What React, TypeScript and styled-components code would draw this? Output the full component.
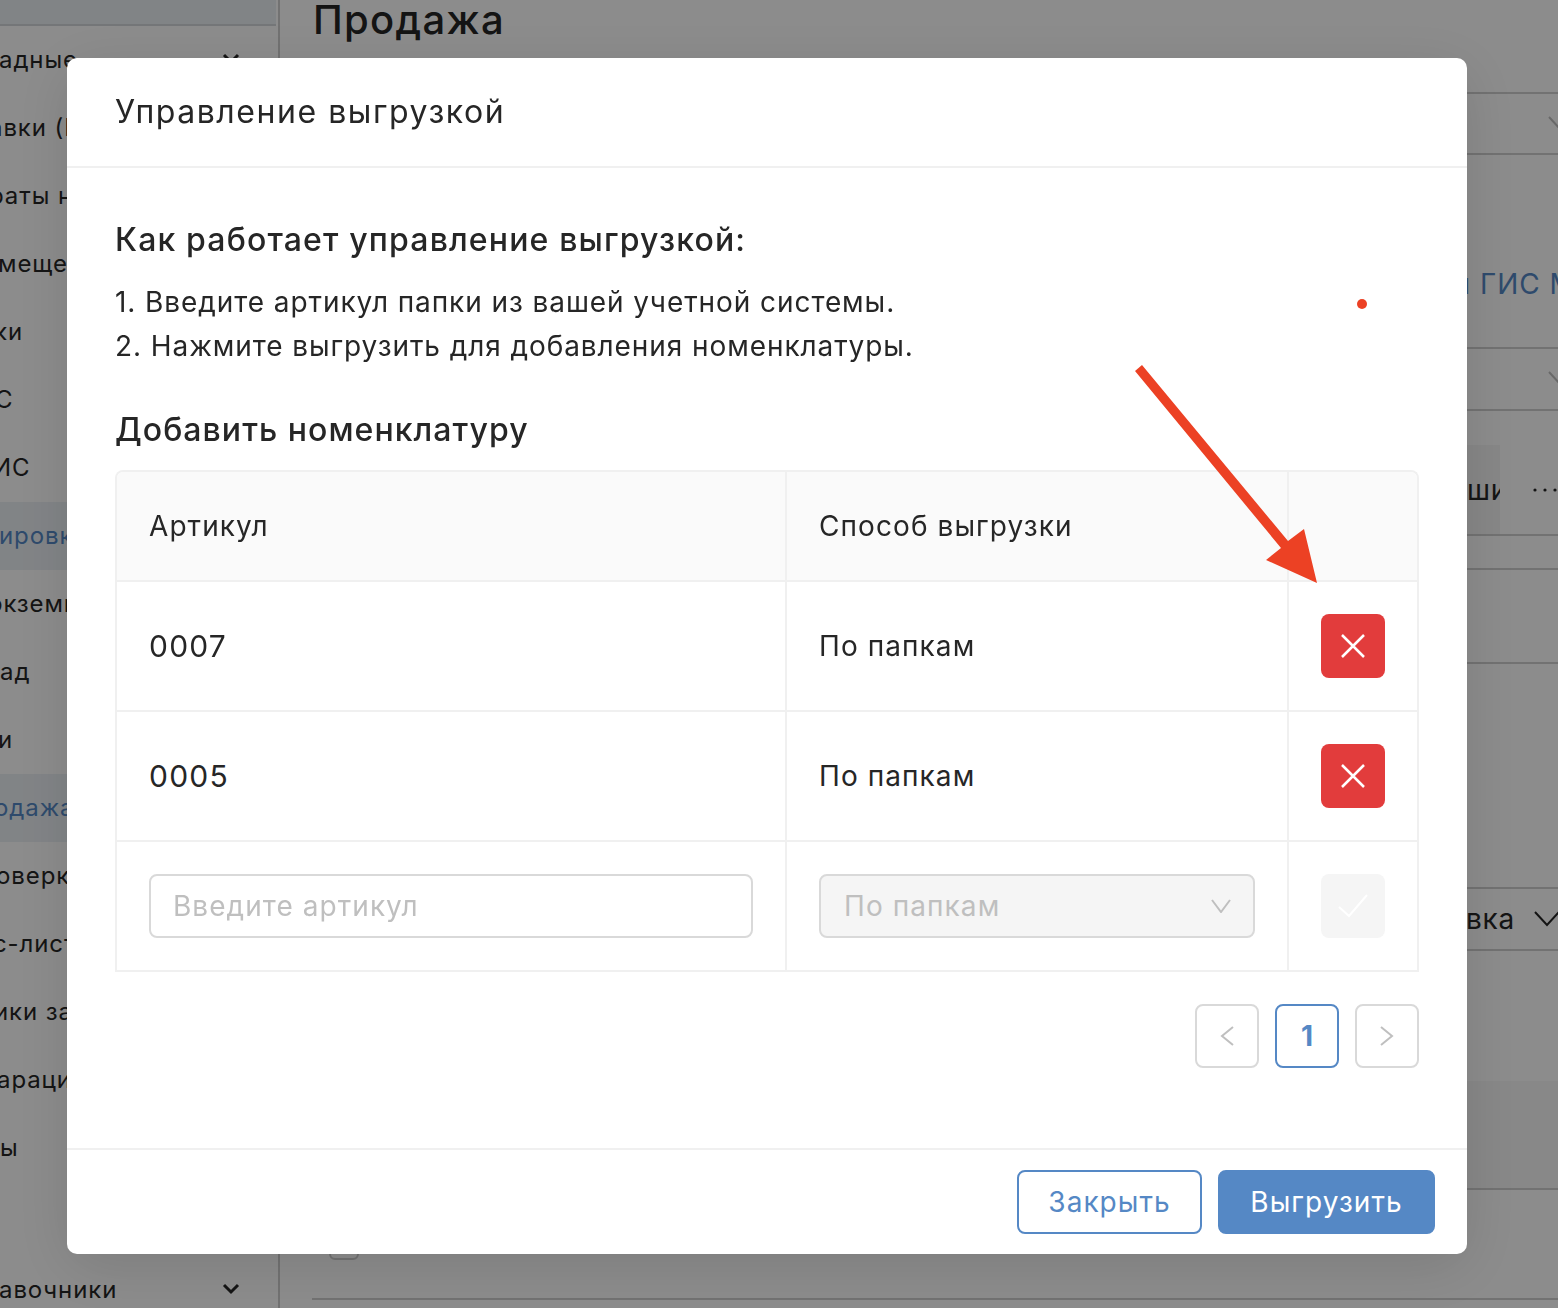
import * as React from 'react'
import styled, { createGlobalStyle } from 'styled-components'

const GlobalStyle = createGlobalStyle`
  html, body {
    margin: 0;
    padding: 0;
    height: 100%;
    overflow: hidden;
    background: white;
    font-family: Inter, "Noto Sans", "Liberation Sans", sans-serif;
    color: #262626;
  }
  * {
    box-sizing: border-box;
  }
`

const PageContainer = styled.div`
  display: flex;
  width: 1558px;
  height: 1308px;
  overflow: hidden;
`

const Sidebar = styled.div`
  display: flex;
  flex-direction: column;
  flex-shrink: 0;
  width: 280px;
  border-right: 2px solid #cfcfcf;
  overflow: hidden;
`

const SidebarTop = styled.div`
  flex-shrink: 0;
  width: 276px;
  height: 26px;
  background-color: #ecf1f5;
  border-bottom: 2px solid #d4d8db;
`

const SidebarItem = styled.div<{ $active?: boolean; $gap?: number }>`
  display: flex;
  flex-shrink: 0;
  align-items: center;
  justify-content: space-between;
  height: 68px;
  margin-top: ${(p) => p.$gap || 0}px;
  padding: 0 38px 2px 0;
  font-size: 24px;
  letter-spacing: 0.9px;
  white-space: nowrap;
  background-color: ${(p) => (p.$active ? '#ecf1f5' : 'transparent')};
  color: ${(p) => (p.$active ? '#5588c5' : '#262626')};
`

const SidebarLabel = styled.span<{ $shift?: number }>`
  margin-left: ${(p) => p.$shift || 0}px;
`

const Main = styled.div`
  display: flex;
  flex-direction: column;
  flex-grow: 1;
  min-width: 0;
  padding-left: 32px;
  overflow: hidden;
`

const PageTitle = styled.h1`
  flex-shrink: 0;
  height: 92px;
  margin: 0;
  padding-left: 1px;
  font-size: 40px;
  font-weight: 500;
  line-height: 40px;
  letter-spacing: 1.3px;
`

const Field = styled.div<{ $gap?: number; $height: number }>`
  display: flex;
  flex-shrink: 0;
  align-items: center;
  justify-content: flex-end;
  gap: 19px;
  height: ${(p) => p.$height}px;
  margin-top: ${(p) => p.$gap || 0}px;
  border-top: 2px solid #cfcfcf;
  border-bottom: 2px solid #cfcfcf;
  font-size: 28px;
  letter-spacing: 0.8px;
`

const BlueLink = styled.div`
  display: flex;
  flex-shrink: 0;
  align-items: center;
  justify-content: flex-end;
  height: 192px;
  padding-top: 66px;
  margin-right: -37px;
  font-size: 28px;
  letter-spacing: 1px;
  white-space: nowrap;
  color: #5588c5;
`

const Tabs = styled.div`
  display: flex;
  flex-shrink: 0;
  align-items: stretch;
  justify-content: flex-end;
  height: 91px;
  margin-top: 34px;
  border-bottom: 2px solid #cfcfcf;
`

const Tab = styled.div`
  display: flex;
  align-items: center;
  width: 300px;
  padding-left: 267px;
  margin-right: 33px;
  background-color: #f5f5f5;
  font-size: 28px;
  letter-spacing: 0.8px;
  white-space: nowrap;
  overflow: hidden;
`

const DotsSlot = styled.div`
  display: flex;
  align-items: center;
  margin-right: 1px;
`

const Band = styled.div`
  flex-shrink: 0;
  height: 109px;
  margin-top: 130px;
  background-color: #f7f7f7;
  border-bottom: 2px solid #cfcfcf;
`

const CheckRow = styled.div`
  display: flex;
  flex-shrink: 0;
  height: 110px;
  padding: 40px 0 0 17px;
  border-bottom: 2px solid #cfcfcf;
`

const RowCheckbox = styled.div`
  width: 30px;
  height: 30px;
  border: 2px solid #cfcfcf;
  border-radius: 6px;
`

const Overlay = styled.div`
  position: fixed;
  inset: 0;
  padding: 58px 0 0 67px;
  background-color: rgba(0, 0, 0, 0.45);
`

const Modal = styled.div`
  display: flex;
  flex-direction: column;
  width: 1400px;
  height: 1196px;
  background-color: white;
  border-radius: 10px;
  box-shadow: 0 12px 60px rgba(0, 0, 0, 0.12);
`

const ModalHeader = styled.div`
  display: flex;
  flex-shrink: 0;
  align-items: center;
  height: 110px;
  padding: 0 48px 2px;
  border-bottom: 2px solid #f0f0f0;
  font-size: 32px;
  font-weight: 400;
  letter-spacing: 1.55px;
`

const ModalBody = styled.div`
  display: flex;
  flex-direction: column;
  flex-grow: 1;
  padding: 54px 48px 0;
`

const Heading = styled.div<{ $gap?: number; $spacing: number }>`
  margin-top: ${(p) => p.$gap || 0}px;
  font-size: 32px;
  font-weight: 500;
  line-height: 36px;
  letter-spacing: ${(p) => p.$spacing}px;
`

const Steps = styled.div`
  margin-top: 22px;
  font-size: 28px;
  line-height: 44px;
  letter-spacing: 0.92px;
`

const Table = styled.div`
  display: grid;
  grid-template-columns: 670px 502px 128px;
  grid-template-rows: 110px repeat(3, 130px);
  margin-top: 22px;
  border: 2px solid #f0f0f0;
  border-bottom: 0;
  border-radius: 8px 8px 0 0;
  overflow: hidden;
`

const Cell = styled.div<{ $head?: boolean; $last?: boolean; $code?: boolean }>`
  display: flex;
  align-items: center;
  padding: 0 32px;
  background-color: ${(p) => (p.$head ? '#fafafa' : 'white')};
  border-bottom: 2px solid #f0f0f0;
  border-right: ${(p) => (p.$last ? '0' : '2px solid #f0f0f0')};
  font-size: ${(p) => (p.$code ? '30px' : '28px')};
  letter-spacing: ${(p) => (p.$code ? '1.2px' : '1.08px')};
`

const TextInput = styled.input`
  width: 100%;
  height: 64px;
  padding: 0 22px;
  border: 2px solid #d9d9d9;
  border-radius: 8px;
  outline: none;
  font-family: inherit;
  font-size: 28px;
  letter-spacing: 1.05px;
  color: #262626;

  &::placeholder {
    color: #bfbfbf;
    opacity: 1;
  }
`

const SelectBox = styled.div`
  display: flex;
  align-items: center;
  justify-content: space-between;
  width: 100%;
  height: 64px;
  padding: 0 22px 0 23px;
  background-color: #f5f5f5;
  border: 2px solid #d9d9d9;
  border-radius: 8px;
  color: #bfbfbf;
`

const IconButton = styled.button<{ $danger?: boolean }>`
  display: flex;
  flex-shrink: 0;
  align-items: center;
  justify-content: center;
  width: 64px;
  height: 64px;
  padding: 0;
  border: 0;
  border-radius: 8px;
  background-color: ${(p) => (p.$danger ? '#e23c3c' : '#f5f5f5')};
`

const Pagination = styled.div`
  display: flex;
  justify-content: flex-end;
  gap: 16px;
  margin-top: 32px;
`

const PageButton = styled.button<{ $active?: boolean }>`
  display: flex;
  align-items: center;
  justify-content: center;
  width: 64px;
  height: 64px;
  padding: 0;
  background-color: white;
  border: 2px solid ${(p) => (p.$active ? '#5588c5' : '#d9d9d9')};
  border-radius: 8px;
  font-family: inherit;
  font-size: 28px;
  font-weight: 700;
  color: #5588c5;
`

const ModalFooter = styled.div`
  display: flex;
  flex-shrink: 0;
  justify-content: flex-end;
  gap: 16px;
  height: 106px;
  padding: 20px 32px 0;
  border-top: 2px solid #f0f0f0;
`

const FooterButton = styled.button<{ $primary?: boolean; $width: number }>`
  width: ${(p) => p.$width}px;
  height: 64px;
  padding: 0;
  background-color: ${(p) => (p.$primary ? '#5588c5' : 'white')};
  border: 2px solid #5588c5;
  border-radius: 8px;
  font-family: inherit;
  font-size: 28px;
  letter-spacing: 1.05px;
  color: ${(p) => (p.$primary ? 'white' : '#5588c5')};
`

const ChevronSlot = styled.span<{ $bleed: number }>`
  display: flex;
  margin-right: -${(p) => p.$bleed}px;
`

const Annotation = styled.svg`
  position: absolute;
  top: 0;
  left: 0;
  pointer-events: none;
`

const StrokeIcon = ({
  width,
  height,
  d,
  color,
  stroke = 2,
}: {
  width: number
  height: number
  d: string
  color: string
  stroke?: number
}) => (
  <svg
    width={width}
    height={height}
    viewBox={`0 0 ${width} ${height}`}
    fill="none"
    stroke={color}
    strokeWidth={stroke}
    style={{ flexShrink: 0 }}
  >
    <path d={d} />
  </svg>
)

const CloseIcon = () => <StrokeIcon width={24} height={24} d="M1 1 L23 23 M23 1 L1 23" color="white" stroke={2.5} />
const MenuChevron = () => <StrokeIcon width={18} height={12} d="M2 2 L9 9 L16 2" color="#262626" stroke={3} />
const FieldChevron = ({ color, bleed }: { color: string; bleed: number }) => (
  <ChevronSlot $bleed={bleed}>
    <StrokeIcon width={26} height={16} d="M1 1 L13 14 L25 1" color={color} />
  </ChevronSlot>
)
const MoreIcon = () => (
  <svg width={24} height={6} viewBox="0 0 24 6" fill="#262626">
    <circle cx={2} cy={3} r={1.6} />
    <circle cx={12} cy={3} r={1.6} />
    <circle cx={22} cy={3} r={1.6} />
  </svg>
)

const sidebarItems = [
  { label: 'адные', shift: -1 },
  { label: 'авки (К', shift: -11 },
  { label: 'раты на', shift: -11 },
  { label: 'мещения', shift: -2 },
  { label: 'ки', shift: -6 },
  { label: 'С', shift: -5 },
  { label: 'ИС', shift: -7 },
  { label: 'ировка', shift: -1, active: true },
  { label: 'экземпляры', shift: -11 },
  { label: 'ад', shift: 0 },
  { label: 'и', shift: -2 },
  { label: 'одажа', shift: -6, active: true },
  { label: 'оверка', shift: -4 },
  { label: 'с-листы', shift: -7 },
  { label: 'ики за', shift: -6 },
  { label: 'арации', shift: -3 },
  { label: 'ы', shift: 0 },
  { label: '', shift: 0 },
]

const rows = ['0007', '0005']

export default function App() {
  return (
    <PageContainer>
      <GlobalStyle />
      <Sidebar>
        <SidebarTop />
        {sidebarItems.map((item, index) => (
          <SidebarItem key={index} $active={item.active}>
            <SidebarLabel $shift={item.shift}>{item.label}</SidebarLabel>
            {index === 0 && <MenuChevron />}
          </SidebarItem>
        ))}
        <SidebarItem $gap={6}>
          <SidebarLabel $shift={-1}>авочники</SidebarLabel>
          <MenuChevron />
        </SidebarItem>
      </Sidebar>

      <Main>
        <PageTitle>Продажа</PageTitle>
        <Field $height={63}>
          <FieldChevron color="#bfbfbf" bleed={16} />
        </Field>
        <BlueLink>и ГИС МТ</BlueLink>
        <Field $height={64}>
          <FieldChevron color="#bfbfbf" bleed={16} />
        </Field>
        <Tabs>
          <Tab>шик</Tab>
          <DotsSlot>
            <MoreIcon />
          </DotsSlot>
        </Tabs>
        <Field $gap={32} $height={96} />
        <Field $gap={223} $height={64}>
          вка
          <FieldChevron color="#262626" bleed={2} />
        </Field>
        <Band />
        <CheckRow>
          <RowCheckbox />
        </CheckRow>
      </Main>

      <Overlay>
        <Modal>
          <ModalHeader>Управление выгрузкой</ModalHeader>
          <ModalBody>
            <Heading $spacing={1.15}>Как работает управление выгрузкой:</Heading>
            <Steps>
              <div>1. Введите артикул папки из вашей учетной системы.</div>
              <div>2. Нажмите выгрузить для добавления номенклатуры.</div>
            </Steps>
            <Heading $gap={44} $spacing={1.05}>
              Добавить номенклатуру
            </Heading>
            <Table>
              <Cell $head>Артикул</Cell>
              <Cell $head>Способ выгрузки</Cell>
              <Cell $head $last />
              {rows.map((code) => (
                <React.Fragment key={code}>
                  <Cell $code>{code}</Cell>
                  <Cell>По папкам</Cell>
                  <Cell $last>
                    <IconButton $danger>
                      <CloseIcon />
                    </IconButton>
                  </Cell>
                </React.Fragment>
              ))}
              <Cell>
                <TextInput placeholder="Введите артикул" />
              </Cell>
              <Cell>
                <SelectBox>
                  По папкам
                  <StrokeIcon width={20} height={14} d="M1 1 L10 13 L19 1" color="#bfbfbf" />
                </SelectBox>
              </Cell>
              <Cell $last>
                <IconButton>
                  <StrokeIcon width={30} height={24} d="M1 13 L11 22 L29 1" color="white" />
                </IconButton>
              </Cell>
            </Table>
            <Pagination>
              <PageButton>
                <StrokeIcon width={14} height={20} d="M13 1 L2 10 L13 19" color="#bfbfbf" />
              </PageButton>
              <PageButton $active>1</PageButton>
              <PageButton>
                <StrokeIcon width={14} height={20} d="M1 1 L12 10 L1 19" color="#bfbfbf" />
              </PageButton>
            </Pagination>
          </ModalBody>
          <ModalFooter>
            <FooterButton $width={185}>Закрыть</FooterButton>
            <FooterButton $primary $width={217}>
              Выгрузить
            </FooterButton>
          </ModalFooter>
        </Modal>
        <Annotation width={1558} height={1308} viewBox="0 0 1558 1308">
          <circle cx={1362} cy={304} r={5} fill="#ec4124" />
          <polygon points="1135,371 1142,365 1288,541 1304,529 1317,583 1266,560 1281,548" fill="#ec4124" />
        </Annotation>
      </Overlay>
    </PageContainer>
  )
}
